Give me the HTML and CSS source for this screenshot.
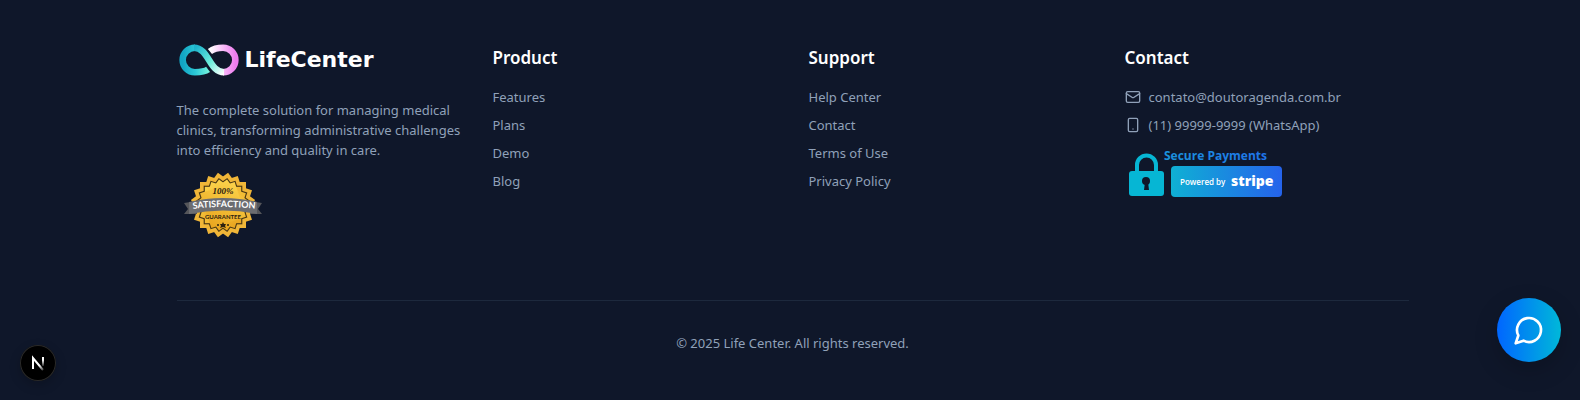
FILE: index.html
```html
<!DOCTYPE html>
<html lang="en">
<head>
    <meta charset="UTF-8">
    <meta name="viewport" content="width=device-width, initial-scale=1">
    <title>Life Center</title>
    <link rel="stylesheet" href="styles.css">
</head>
<body>
<footer class="footer">
    <div class="container">
        <div class="columns">
            <div class="brand">
                <a href="#" class="logo">
                    <svg class="logo-mark" viewBox="0 0 64 34" aria-hidden="true">
                        <defs>
                            <linearGradient id="loop-left" x1="0" y1="0" x2="1" y2="0">
                                <stop offset="0" stop-color="#12a5c4"/>
                                <stop offset="0.5" stop-color="#2cc8d6"/>
                                <stop offset="1" stop-color="#6ff0dc"/>
                            </linearGradient>
                            <linearGradient id="loop-right" x1="0" y1="0" x2="1" y2="0">
                                <stop offset="0" stop-color="#ffffff"/>
                                <stop offset="0.35" stop-color="#fbd3fb"/>
                                <stop offset="1" stop-color="#ee7cf0"/>
                            </linearGradient>
                            <linearGradient id="loop-cross" gradientUnits="userSpaceOnUse" x1="18" y1="4" x2="48" y2="31">
                                <stop offset="0" stop-color="#1fb4cc"/>
                                <stop offset="0.55" stop-color="#6ff0dc"/>
                                <stop offset="1" stop-color="#ffffff"/>
                            </linearGradient>
                        </defs>
                        <path d="M31 27C27 30 22 30 17 30A13 13 0 0 1 17 4" fill="none" stroke="url(#loop-left)" stroke-width="7"/>
                        <path d="M33 8C38 4 43 4 47 4A13 13 0 0 1 47 30" fill="none" stroke="url(#loop-right)" stroke-width="7"/>
                        <path d="M16 4C32 4 32 30 48 30" fill="none" stroke="url(#loop-cross)" stroke-width="7"/>
                    </svg>
                    <span class="logo-name">LifeCenter</span>
                </a>
                <p class="about">The complete solution for managing medical clinics, transforming administrative challenges into efficiency and quality in care.</p>
                <svg class="seal" viewBox="0 0 94 92" role="img" aria-label="100% satisfaction guarantee">
                    <defs>
                        <linearGradient id="gold" x1="0" y1="0" x2="1" y2="1">
                            <stop offset="0" stop-color="#fbd24a"/>
                            <stop offset="1" stop-color="#e9a51f"/>
                        </linearGradient>
                        <rect id="square" x="-23" y="-23" width="46" height="46"/>
                        <g id="star">
                            <use href="#square"/>
                            <use href="#square" transform="rotate(18)"/>
                            <use href="#square" transform="rotate(36)"/>
                            <use href="#square" transform="rotate(54)"/>
                            <use href="#square" transform="rotate(72)"/>
                        </g>
                        <path id="arc-title" d="M8 50Q47 44 86 50"/>
                    </defs>
                    <use href="#star" fill="#f0b638" transform="translate(46 45)"/>
                    <use href="#star" fill="#4a3813" transform="translate(46 45) scale(0.84)"/>
                    <use href="#star" fill="url(#gold)" transform="translate(46 45) scale(0.79)"/>
                    <text x="46" y="34" class="seal-percent">100%</text>
                    <path d="M7 43L20 41V54L7 54L11 49Z" fill="#55565a"/>
                    <path d="M85 43L73 41V54L85 54L81 49Z" fill="#55565a"/>
                    <path d="M12 42Q46 34 80 42V54Q46 47 12 54Z" fill="#6c6d71"/>
                    <text class="seal-title"><textPath href="#arc-title" startOffset="50%">SATISFACTION</textPath></text>
                    <text x="46" y="59" class="seal-sub">GUARANTEE</text>
                    <path d="M46 62L47 64H49L48 66L49 68L46 67L43 68L44 66L43 64H45Z" fill="#2b2110"/>
                    <circle cx="41" cy="65" r="1" fill="#2b2110"/>
                    <circle cx="51" cy="65" r="1" fill="#2b2110"/>
                </svg>
            </div>

            <nav aria-labelledby="product">
                <h3 id="product">Product</h3>
                <ul>
                    <li><a href="#">Features</a></li>
                    <li><a href="#">Plans</a></li>
                    <li><a href="#">Demo</a></li>
                    <li><a href="#">Blog</a></li>
                </ul>
            </nav>

            <nav aria-labelledby="support">
                <h3 id="support">Support</h3>
                <ul>
                    <li><a href="#">Help Center</a></li>
                    <li><a href="#">Contact</a></li>
                    <li><a href="#">Terms of Use</a></li>
                    <li><a href="#">Privacy Policy</a></li>
                </ul>
            </nav>

            <div>
                <h3>Contact</h3>
                <ul>
                    <li class="contact-item">
                        <svg class="icon" viewBox="0 0 24 24" aria-hidden="true">
                            <rect x="2" y="4" width="20" height="16" rx="2"/>
                            <path d="m22 7-8.970 5.700a1.940 1.940 0 0 1-2.060 0L2 7"/>
                        </svg>
                        <span>contato@doutoragenda.com.br</span>
                    </li>
                    <li class="contact-item">
                        <svg class="icon" viewBox="0 0 24 24" aria-hidden="true">
                            <rect x="5" y="2" width="14" height="20" rx="2"/>
                            <path d="M12 18h.01"/>
                        </svg>
                        <span>(11) 99999-9999 (WhatsApp)</span>
                    </li>
                </ul>
                <svg class="payments" viewBox="0 0 160 56" role="img" aria-label="Secure payments powered by Stripe">
                    <defs>
                        <linearGradient id="pay" x1="0" y1="0" x2="1" y2="0">
                            <stop offset="0" stop-color="#0fb0d4"/>
                            <stop offset="1" stop-color="#2563eb"/>
                        </linearGradient>
                        <linearGradient id="pay-text" x1="0" y1="0" x2="1" y2="0">
                            <stop offset="0" stop-color="#1a94dc"/>
                            <stop offset="1" stop-color="#1f74ea"/>
                        </linearGradient>
                    </defs>
                    <path d="M12 28V21a9 9 0 0 1 19 0V28" fill="none" stroke="#06b6d4" stroke-width="4"/>
                    <rect x="4" y="27" width="35" height="25" rx="3" fill="#06b6d4"/>
                    <circle cx="21" cy="37" r="4" fill="#0f172a"/>
                    <path d="M20 38h3l1 8h-5z" fill="#0f172a"/>
                    <text x="39" y="16" class="pay-title">Secure Payments</text>
                    <rect x="46" y="22" width="111" height="31" rx="4" fill="url(#pay)"/>
                    <text x="55" y="41" class="pay-by">Powered by</text>
                    <text x="106" y="42" class="pay-name">stripe</text>
                </svg>
            </div>
        </div>

        <div class="bottom">
            <p>© 2025 Life Center. All rights reserved.</p>
        </div>
    </div>
</footer>

<button type="button" class="dev-btn" aria-label="Open developer tools">
    <svg viewBox="0 0 36 36" aria-hidden="true">
        <defs>
            <linearGradient id="fade-diagonal" gradientUnits="userSpaceOnUse" x1="13" y1="13" x2="24" y2="25">
                <stop offset="0.6" stop-color="#fff"/>
                <stop offset="1" stop-color="#fff" stop-opacity="0.2"/>
            </linearGradient>
            <linearGradient id="fade-stem" gradientUnits="userSpaceOnUse" x1="0" y1="12" x2="0" y2="22">
                <stop offset="0.3" stop-color="#fff"/>
                <stop offset="1" stop-color="#fff" stop-opacity="0"/>
            </linearGradient>
        </defs>
        <path d="M13 24V13L23 25" fill="none" stroke="url(#fade-diagonal)" stroke-width="2"/>
        <path d="M23 12V21" stroke="url(#fade-stem)" stroke-width="2"/>
    </svg>
</button>

<button type="button" class="chat-btn" aria-label="Open chat">
    <svg viewBox="0 0 24 24" aria-hidden="true">
        <path d="M7.900 20A9 9 0 1 0 4 16.100L2 22Z"/>
    </svg>
</button>
</body>
</html>
```
FILE: styles.css
```css
* {
    box-sizing: border-box;
}

body {
    margin: 0;
    background: #0f172a;
    color: #90a1b9;
    font-family: "Noto Sans", "Open Sans", sans-serif;
    font-size: 13px;
    line-height: 20px;
}

h3, p, ul {
    margin: 0;
    padding: 0;
}

ul {
    display: grid;
    gap: 8px;
    list-style: none;
}

a {
    color: inherit;
    text-decoration: none;
}

a:hover {
    color: #fff;
}

button {
    padding: 0;
    border: 0;
    cursor: pointer;
}

.footer {
    padding: 44px 0 47px 5px;
}

.container {
    max-width: 1280px;
    margin: 0 auto;
    padding: 0 24px;
}

.columns {
    display: grid;
    grid-template-columns: repeat(4, 1fr);
    gap: 32px;
}

.columns h3 {
    margin-bottom: 15px;
    color: #fff;
    font-size: 17px;
    font-weight: 600;
    line-height: 28px;
}

.logo {
    display: flex;
    align-items: center;
    gap: 4px;
    margin-bottom: 24px;
}

.logo-mark {
    width: 64px;
    height: 32px;
}

.logo-name {
    color: #fff;
    font: bold 22px/32px "DejaVu Sans", sans-serif;
}

/* seal */
.seal {
    display: block;
    width: 94px;
    height: 92px;
}

.seal text {
    text-anchor: middle;
}

.seal-percent {
    fill: #2b2110;
    font: italic bold 9px "Liberation Serif", serif;
}

.seal-title {
    fill: #fff;
    font: bold 9px Lato, sans-serif;
}

.seal-sub {
    fill: #2b2110;
    font: bold 6px Lato, sans-serif;
}

/* contact */
.contact-item {
    display: flex;
    align-items: center;
    gap: 8px;
}

.icon {
    width: 16px;
    height: 16px;
    fill: none;
    stroke: currentColor;
    stroke-width: 2;
    stroke-linecap: round;
    stroke-linejoin: round;
}

.payments {
    display: block;
    width: 160px;
    height: 56px;
    margin-top: 9px;
}

.pay-title {
    fill: url(#pay-text);
    font: bold 12px "Open Sans", sans-serif;
}

.pay-by {
    fill: #fff;
    font: 600 8px "Open Sans", sans-serif;
}

.pay-name {
    fill: #fff;
    font: 800 14px "Open Sans", sans-serif;
}

.bottom {
    margin-top: 48px;
    padding-top: 32px;
    border-top: 1px solid #1d293d;
    text-align: center;
}

/* floating buttons */
.dev-btn {
    position: fixed;
    left: 20px;
    bottom: 19px;
    width: 36px;
    height: 36px;
    border-radius: 50%;
    background: #000;
    box-shadow: inset 0 0 0 1px #2a2a2a, 0 4px 12px rgba(0, 0, 0, 0.2);
}

.dev-btn svg {
    display: block;
}

.chat-btn {
    display: flex;
    align-items: center;
    justify-content: center;
    position: fixed;
    right: 19px;
    bottom: 38px;
    width: 64px;
    height: 64px;
    border-radius: 50%;
    background: linear-gradient(to right, #0066ff, #00b8d9);
    box-shadow: 0 8px 24px rgba(0, 0, 0, 0.2);
}

.chat-btn svg {
    width: 32px;
    height: 32px;
    fill: none;
    stroke: #fff;
    stroke-width: 2;
    stroke-linecap: round;
    stroke-linejoin: round;
}
```
